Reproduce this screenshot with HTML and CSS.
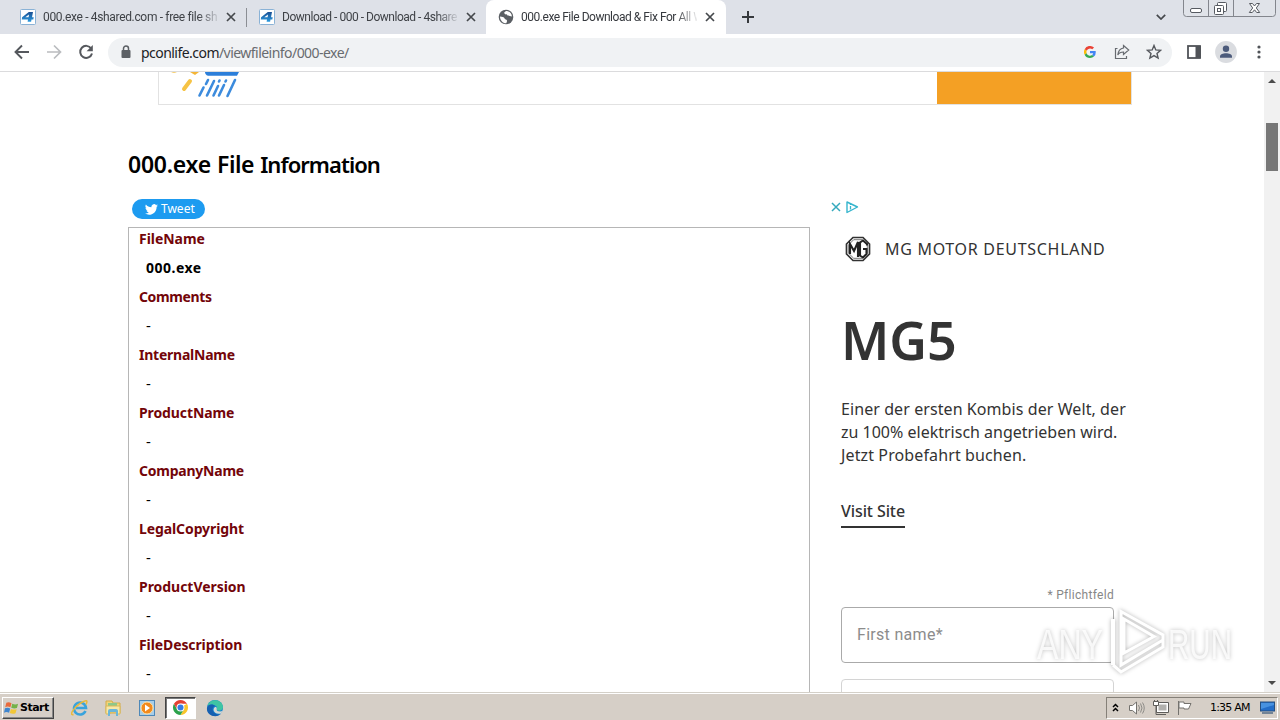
FILE: index.html
```html
<!DOCTYPE html>
<html lang="en">
<head>
<meta charset="utf-8">
<title>000.exe File Download &amp; Fix For All Windows OS</title>
<link rel="stylesheet" href="styles.css">
</head>
<body>
<svg class="defs" width="0" height="0">
  <defs>
    <linearGradient id="blue4" x1="0" y1="0" x2="0" y2="1"><stop offset="0" stop-color="#1a4f93"/><stop offset="1" stop-color="#2b9be0"/></linearGradient>
    <symbol id="four" viewBox="0 0 16 16"><rect x=".5" y=".5" width="15" height="15" rx="1" fill="#fff" stroke="#8ab2d6"/><path d="M8.800 3h4.200L12 8.200h1.700l-.4 2.300h-1.800l-.4 2.300H7.600l.4-2.300H1.800l.3-2.200zM9 5.400 5.300 8.200h3.300z" fill="url(#blue4)"/></symbol>
    <symbol id="close" viewBox="0 0 10 10"><path d="m1 1 8 8M9 1 1 9" stroke="#45484c" stroke-width="1.7"/></symbol>
  </defs>
</svg>
<header class="tabstrip">
  <div class="tab first"><svg class="fav"><use href="#four"/></svg><span class="tab-title t1">000.exe - 4shared.com - free file sh</span><svg class="x"><use href="#close"/></svg></div>
  <div class="tab"><svg class="fav"><use href="#four"/></svg><span class="tab-title t2">Download - 000 - Download - 4share</span><svg class="x"><use href="#close"/></svg></div>
  <div class="tab active"><svg class="fav" viewBox="0 0 16 16"><circle cx="8" cy="8" r="7.300" fill="#5b5f64"/><path d="M2 7.500c2 .2 4.200.6 4.600 2 .5 1.300 2.400.8 2.500 2.400l-.8 2.400C5 14.500 2 11.500 2 7.500zM8 2c-1 1-2.600 1.400-1.300 2.700.8.8 2.300.2 2.600 1.300.4 1.500 2.700.8 4.600 1.600C14 4.700 11.500 2 8 2z" fill="#fff"/></svg><span class="tab-title t3">000.exe File Download &amp; Fix For All W</span><svg class="x"><use href="#close"/></svg></div>
  <svg class="plus" viewBox="0 0 12 12"><path d="M6 0v12M0 6h12" stroke="#36393d" stroke-width="2"/></svg>
  <svg class="chev" viewBox="0 0 10 6"><path d="m.8.8 4.200 4.200L9.200.8" fill="none" stroke="#45484c" stroke-width="1.7"/></svg>
  <svg class="winbtns" viewBox="0 0 94 17"><path d="M.5 0v13.500a3 3 0 0 0 3 3h86a3 3 0 0 0 3-3V0M25.500 0v16M50.500 0v16" fill="#e0e3e9" stroke="#83868d"/><g fill="#fff" stroke="#565a61"><rect x="7.500" y="8.500" width="11" height="4" rx="1.500"/><rect x="34.500" y="2.500" width="9" height="9" rx="1"/><rect x="31.500" y="5.500" width="9" height="9" rx="1"/><rect x="34.500" y="8.500" width="3" height="3"/></g><path d="m66.500 3.500h3l2 2.500 2-2.500h3L73.300 8l3.400 4.500h-3l-2.200-2.700-2.200 2.700h-3L69.700 8z" fill="#fff" stroke="#565a61"/></svg>
</header>
<nav class="toolbar">
  <svg class="ic" viewBox="0 0 16 16"><path d="M15 8H2M8 1.500 1.500 8 8 14.500" fill="none" stroke="#55585d" stroke-width="1.9"/></svg>
  <svg class="ic" viewBox="0 0 16 16"><path d="M1 8h13M8 1.500 14.500 8 8 14.500" fill="none" stroke="#babcbf" stroke-width="1.7"/></svg>
  <svg class="ic" viewBox="0 0 16 16"><path d="M13.200 4.500A6 6 0 1 0 14 9.500" fill="none" stroke="#55585d" stroke-width="2"/><path d="M14.800 1v6.200H8.600z" fill="#55585d"/></svg>
  <div class="omnibox">
    <svg class="lock" viewBox="0 0 10 14"><path d="M2.500 6V3.500a2.500 2.500 0 0 1 5 0V6" fill="none" stroke="#5c6065" stroke-width="1.500"/><rect x=".5" y="5" width="9" height="8" rx="1" fill="#5c6065"/></svg>
    <span class="url"><b>pconlife.com</b>/viewfileinfo/000-exe/</span>
    <svg class="g" viewBox="0 0 48 48"><path fill="#ea4335" d="M24 9.500c3.500 0 6.700 1.200 9.200 3.600l6.900-6.900A24 24 0 0 0 2.600 13.200l8 6.200A14.300 14.300 0 0 1 24 9.500z"/><path fill="#4285f4" d="M47 24.500c0-1.600-.2-3.100-.4-4.500H24v9h12.900a11 11 0 0 1-4.800 7.200l7.700 6A23 23 0 0 0 47 24.500z"/><path fill="#fbbc05" d="M10.500 28.600a14.500 14.500 0 0 1 0-9.200l-8-6.200a24 24 0 0 0 0 21.600z"/><path fill="#34a853" d="M24 48c6.500 0 11.900-2.100 15.900-5.800l-7.700-6A14.400 14.400 0 0 1 10.500 28.600l-8 6.200A24 24 0 0 0 24 48z"/></svg>
    <svg class="share" viewBox="0 0 16 16"><path d="M3.500 4.500h-2v10h11v-2.500M9.500 1.500 14.700 6l-5.200 4.500V8C6.800 8 5 8.800 3.800 11 4.200 7 6 4.500 9.500 4z" fill="none" stroke="#676b70" stroke-width="1.200"/></svg>
    <svg class="star" viewBox="0 0 16 16"><path d="m8 1.500 1.800 4.400 4.800.4L11 9.500l1.100 4.600L8 11.600l-4.100 2.500L5 9.500 1.400 6.300l4.800-.4z" fill="none" stroke="#55585d" stroke-width="1.400"/></svg>
  </div>
  <svg class="side" viewBox="0 0 14 14"><rect x="1" y="1" width="12" height="12" fill="#fff" stroke="#505358" stroke-width="1.800"/><path d="M8.500 1H14v12H8.500z" fill="#505358"/></svg>
  <svg class="avatar" viewBox="0 0 22 22"><circle cx="11" cy="11" r="10.900" fill="#dadce0"/><circle cx="11" cy="7.800" r="3.200" fill="#4c5b7b"/><path d="M5 16.800v-1.300c0-4.200 12-4.200 12 0v1.300z" fill="#4c5b7b"/></svg>
  <svg class="dots" viewBox="0 0 4 14"><g fill="#505358"><circle cx="2" cy="2" r="1.600"/><circle cx="2" cy="7" r="1.600"/><circle cx="2" cy="12" r="1.600"/></g></svg>
</nav>
<main class="viewport">
  <div class="page">
    <div class="banner">
      <svg class="weather" viewBox="0 0 75 28"><path d="M3 0q3 1.500 6 0" fill="#f4bd3c"/><path d="M22 0l5 3 4-3z" fill="#f4b536"/><path d="m22 9-6 8" stroke="#f6c344" stroke-width="4" stroke-linecap="round"/><path d="M37 0h34l-2 3.800H40q-3-1-3-3.800z" fill="#2c7fda"/><path d="m41 8-2 4M36.500 15.500l-4 8M47 9l-7 14.500M52.500 8.500l-.5 1M51 14l-4.500 9.500M59 8.500l-.5 1M57 13l-5 10.500M68 8l-7.500 16" transform="translate(-1)" fill="none" stroke="#3c8bdd" stroke-width="2.600" stroke-linecap="round"/></svg>
      <div class="orange"></div>
    </div>
    <h1><span class="w1">000.exe</span> <span class="w2">File</span> <span class="w3">Information</span></h1>
    <div class="columns">
      <section class="left">
        <div class="tweet"><svg viewBox="0 0 24 20"><path fill="#fff" d="M24 2.400c-.9.400-1.800.6-2.800.8 1-.6 1.800-1.500 2.200-2.700-1 .5-2 1-3.100 1.200A4.900 4.900 0 0 0 11.900 6C7.700 6 4.100 4 1.700.9-.3 4.500 1 6.500 3.200 7.500c-.8 0-1.600-.2-2.200-.6 0 2.300 1.600 4.400 3.900 4.900-.7.200-1.500.2-2.200.1.600 2 2.400 3.400 4.600 3.400A10 10 0 0 1 0 17.500C9 23 21.500 17.500 21.500 4.800c1-.7 1.800-1.500 2.500-2.400z"/></svg><span>Tweet</span></div>
        <dl class="info">
          <dt class="k1">FileName</dt><dd class="name">000.exe</dd>
          <dt class="k2">Comments</dt><dd>-</dd>
          <dt class="k3">InternalName</dt><dd>-</dd>
          <dt class="k4">ProductName</dt><dd>-</dd>
          <dt class="k5">CompanyName</dt><dd>-</dd>
          <dt class="k6">LegalCopyright</dt><dd>-</dd>
          <dt class="k7">ProductVersion</dt><dd>-</dd>
          <dt class="k8">FileDescription</dt><dd>-</dd>
        </dl>
      </section>
      <aside class="ad">
        <svg class="adchoices" viewBox="0 0 30 14"><path d="m2 3 8 8M10 3l-8 8" stroke="#35a9bd" stroke-width="1.500"/><path d="M17 2v10.500L27.500 7z" fill="none" stroke="#35b5cd" stroke-width="1.400" stroke-linejoin="round"/><path d="M20.500 6v3.500M20.500 4v1" stroke="#35b5cd" stroke-width="1.300"/></svg>
        <div class="brand"><svg viewBox="0 0 26 26"><path d="M8 1.500h10L24.500 8v10L18 24.500H8L1.500 18V8z" fill="#fff" stroke="#333" stroke-width="1.700"/><path d="M8.700 3.700h8.600l5 5v8.600l-5 5H8.700l-5-5V8.700z" fill="none" stroke="#555" stroke-width=".8"/><path d="M5 18V8l4 7 4-9v15M22 9.500V8l-4-3.500-3 2v13l3 2 3.500-3.500v-5h-3.500" fill="none" stroke="#222" stroke-width="2.100"/></svg><span>MG MOTOR DEUTSCHLAND</span></div>
        <h2>MG5</h2>
        <p class="copy"><span class="c1">Einer der ersten Kombis der Welt, der</span><br><span class="c2">zu 100% elektrisch angetrieben wird.</span><br><span class="c3">Jetzt Probefahrt buchen.</span></p>
        <a class="visit">Visit Site</a>
        <div class="required">* Pflichtfeld</div>
        <div class="field">First name*</div>
        <div class="field dim"></div>
      </aside>
    </div>
  </div>
  <div class="scrollbar">
    <svg viewBox="0 0 8 4"><path d="M0 4h8L4 0z" fill="#4b4b4b"/></svg>
    <div class="thumb"></div>
    <svg class="down" viewBox="0 0 8 4"><path d="M0 0h8L4 4z" fill="#4b4b4b"/></svg>
  </div>
</main>
<footer class="taskbar">
  <div class="start"><svg viewBox="0 0 16 16"><path d="M2.500 2.500Q5 1 8 3L6.800 7.300Q4 5.800 1.300 7.200z" fill="#e96a3c"/><path d="M8.800 3.400Q12 5 15 3.500L13.800 8Q11 9 7.700 7.700z" fill="#73b24a"/><path d="M1 8.300q3-1.300 5.600.2L5.400 13Q2.500 11.500 0 13z" fill="#3e85cf"/><path d="M7.400 9q3 1.200 6.100.2L12.300 13.500q-3 1.300-6.100-.2z" fill="#f2c737"/></svg><b>Start</b></div>
  <svg class="app ie" viewBox="0 0 18 18"><path d="M14.500 12A6 6 0 1 1 15 9H5" fill="none" stroke="#39a3dc" stroke-width="2.600"/><path d="M2.500 15.500C-2 17 2 9 9 4.500s8-3 6 1" fill="none" stroke="#e9b93a" stroke-width="1.500"/></svg>
  <svg class="app folder" viewBox="0 0 18 18"><path d="M2 2h6l1 2h7v10H2z" fill="#f1d479" stroke="#d4ac49"/><path d="M4 4h9v3H4z" fill="#8ec889"/><path d="M2 7h14v8h-3v-4H6v4H2z" fill="#f8e8a6" stroke="#d9b95b"/><path d="M4 17v-5q0-2 2-2h6q2 0 2 2v5h-2v-4H6v4z" fill="#6bb6d9"/></svg>
  <svg class="app media" viewBox="0 0 18 18"><rect x="1.500" y="1.500" width="15" height="15" fill="#a7cee9" stroke="#4e88b8"/><circle cx="9" cy="9" r="6" fill="#f28a1d" stroke="#ffe0a5"/><path d="M7 5.500v7l5-3.500z" fill="#fff"/></svg>
  <div class="running"><svg viewBox="0 0 18 18"><path d="M9 9 15.900 5A8 8 0 0 1 9 17l3.500-6z" fill="#f9c52b"/><path d="M9 9l3.500 2L9 17A8 8 0 0 1 2.100 5L5.500 11z" fill="#2ba24c"/><path d="M2.100 5 5.500 11 9 5h6.900A8 8 0 0 0 2.100 5z" fill="#e34133"/><circle cx="9" cy="9" r="4.200" fill="#fff"/><circle cx="9" cy="9" r="3.200" fill="#347be4"/></svg></div>
  <svg class="app edge" viewBox="0 0 18 18"><circle cx="9" cy="9" r="8" fill="#1782cf"/><path d="M1.500 7C3-.5 16-1 17 8c.2 4-5.500 4.500-6.500 2.500C12 8 10 6.500 8 6 5 5 2.500 6 1.500 7z" fill="#3fc5a3"/><path d="M1 9c1-4 6-4.500 8-2-3 1-3.500 5 0 7.500 2 1.500 4.500 1 6 .3C10 20 0 16 1 9z" fill="#1760b0"/><path d="M9 8c3 0 1 2.500 2 3.500s4 1.500 6 0l-2 3c-4 1-7-1-7.500-3.500Q7.500 9 9 8z" fill="#d6d9d4"/></svg>
  <div class="tray">
    <svg class="up" viewBox="0 0 8 9"><path d="m1 4 2.500-2.500L6 4M1 8l2.500-2.500L6 8" fill="none" stroke="#000" stroke-width="1.500"/></svg>
    <svg class="sound" viewBox="0 0 17 16"><path d="M1.500 5.500h3L8.500 2v12l-4-3.500h-3z" fill="#fff" stroke="#74726e"/><path d="M10.500 5q2 3 0 6M12.500 3.500q3 4.500 0 9M14.500 2.500q3.500 5.500 0 11" fill="none" stroke="#858380" stroke-width=".9"/></svg>
    <svg class="net" viewBox="0 0 17 16"><rect x="5.500" y="3.500" width="10" height="8" fill="#b1b0ad" stroke="#fff" stroke-width="2"/><path d="M4.500 2.500h12v10h-12zM7 14.500h7" fill="none" stroke="#5e5d5a"/><path d="M1.500 1.500h5v4h-5z" fill="#fff" stroke="#5e5d5a"/><path d="M4 5.500v9h3M2.500 0v2M5.500 0v2" fill="none" stroke="#5e5d5a"/></svg>
    <svg class="flag" viewBox="0 0 17 16"><path d="M2.500 1v14M3 2h5v1.500h7L12.500 9H8V8H3z" fill="#fff" stroke="#74726e"/></svg>
    <span class="clock">1:35 AM</span>
    <svg class="desk" viewBox="0 0 15 13"><rect x=".5" y="1" width="14" height="9" fill="#236dc8" stroke="#275080"/><path d="M1 2h13v2L1 8z" fill="#4892e0"/><path d="M2 12h11" stroke="#526b86" stroke-width="1.500"/></svg>
  </div>
</footer>
<svg class="watermark" viewBox="0 0 200 72">
  <g class="wm-shadow" fill="#fff" fill-opacity=".8">
    <text x="1" y="54" textLength="66" lengthAdjust="spacingAndGlyphs">ANY</text>
    <text x="132" y="54" textLength="64" lengthAdjust="spacingAndGlyphs">RUN</text>
    <g fill="none" stroke="#fff" stroke-width="3"><path d="M77 14v46" stroke-width="4"/><path d="M85 6.500 127 30v5L85 60zM88 14v34l30-16.500zM77 60l8 7 42-25v-7"/></g>
  </g>
</svg>
</body>
</html>
```
FILE: styles.css
```css
* { box-sizing: border-box; }
body { margin: 0; width: 1280px; height: 720px; overflow: hidden; display: flex; flex-direction: column; background: #fff; font-family: "Noto Sans", sans-serif; position: relative; }
svg { display: block; flex: none; }
.defs { position: absolute; }

.tabstrip { height: 34px; flex: none; display: flex; align-items: center; background: #dee1e8; }
.tab { width: 239px; height: 34px; padding: 0 10px 0 12px; display: flex; align-items: center; font: 12px/16px Roboto, sans-serif; color: #3f4247; }
.tab.first { width: 247px; padding-left: 20px; border-right: 1px solid transparent; background: linear-gradient(#8b8e94, #8b8e94) right 8px / 1px 19px no-repeat; background-origin: border-box; }
.tab.active { width: 240px; background: #fff; border-radius: 8px 8px 0 0; color: #36393e; }
.fav { width: 16px; height: 16px; margin-right: 7px; }
.tab-title { width: 176px; white-space: nowrap; -webkit-mask-image: linear-gradient(90deg, #000 155px, transparent 178px); mask-image: linear-gradient(90deg, #000 155px, transparent 178px); }
.t1 { letter-spacing: -.34px; }
.t2 { letter-spacing: -.48px; }
.t3 { letter-spacing: -.47px; }
.x { width: 10px; height: 10px; margin-left: 8px; }
.plus { width: 12px; height: 12px; margin-left: 16px; }
.chev { width: 10px; height: 6px; margin-left: auto; }
.winbtns { width: 94px; height: 17px; margin: 0 3px 0 17px; align-self: flex-start; }

.toolbar { height: 38px; flex: none; display: flex; align-items: center; padding: 0 0 1px 14px; border-bottom: 1px solid #dbdbdd; background: #fff; }
.ic { width: 16px; height: 16px; margin-right: 16px; }
.omnibox { width: 1064px; height: 29px; margin-left: -2px; border-radius: 15px; background: #f0f2f4; display: flex; align-items: center; padding: 0 10px 0 13px; }
.lock { width: 10px; height: 14px; margin-right: 10px; }
.url { font: 14px/20px "Noto Sans", sans-serif; color: #686b6f; letter-spacing: -.54px; flex: 1; padding-top: 1px; }
.url b { font-weight: 400; color: #202124; }
.g { width: 12px; height: 12px; margin-right: 18px; }
.share { width: 16px; height: 16px; margin-right: 16px; }
.star { width: 16px; height: 16px; }
.side { width: 14px; height: 14px; margin-left: 15px; }
.avatar { width: 22px; height: 22px; margin-left: 14px; }
.dots { width: 4px; height: 14px; margin-left: 20px; }

.viewport { height: 620px; flex: none; overflow: hidden; display: flex; }
.page { width: 1264px; height: 620px; overflow: hidden; }
.banner { width: 974px; height: 33px; margin-left: 158px; border: 1px solid #e2e2e2; border-top: 0; display: flex; justify-content: space-between; }
.weather { width: 75px; height: 28px; margin-left: 9px; }
.orange { width: 194px; height: 32px; background: #f4a024; }
h1 { margin: 43px 0 0 128px; font: 600 23px/32px "Noto Sans", sans-serif; color: #000; white-space: nowrap; width: max-content; }
.w1 { letter-spacing: -.25px; }
.w2 { letter-spacing: -.4px; }
.w3 { font-size: 22px; letter-spacing: -.95px; }
.columns { display: flex; margin: 19px 0 0 128px; }
.left { width: 682px; }
.tweet { width: 73px; height: 20px; margin-left: 4px; padding-left: 13px; border-radius: 10px; background: #1d9bf0; color: #fff; display: flex; align-items: center; font: 12px/18px "Noto Sans", sans-serif; }
.tweet svg { width: 13px; height: 11px; margin-right: 3px; }
.info { height: 490px; margin: 8px 0 0; border: 1px solid #b6b6b6; padding: 0 10px; color: #000; }
dt, dd { height: 29px; white-space: nowrap; }
dt { color: #730509; font: 700 14px/22px "Noto Sans", sans-serif; letter-spacing: -.1px; }
.k2 { letter-spacing: -.38px; }
.k3, .k5 { letter-spacing: -.23px; }
.k7, .k1 { letter-spacing: -.04px; }
dd { margin: 0 0 0 7px; font: 15px/20px "Noto Sans", sans-serif; }
dd.name { font-weight: 700; font-size: 14px; line-height: 22px; letter-spacing: .5px; }

.ad { width: 300px; height: 560px; margin-left: 18px; padding: 0 13px; display: flex; flex-direction: column; color: #333; }
.ad > * { flex: none; }
.adchoices { width: 30px; height: 14px; margin: 1px 0 0 -11px; }
.brand { display: flex; align-items: center; height: 26px; margin: 22px 0 0 4px; font: 16px/24px "Noto Sans", sans-serif; letter-spacing: .7px; white-space: nowrap; }
.brand svg { width: 26px; height: 26px; margin-right: 14px; }
h2 { margin: 42px 0 0 0; font: 600 52px/72px "Noto Sans", sans-serif; height: 72px; }
.copy { margin: 22px 0 0; font: 16px/23px "Noto Sans", sans-serif; white-space: nowrap; }
.c1 { letter-spacing: .08px; }
.c3 { letter-spacing: .12px; }
.visit { margin-top: 33px; width: 64px; height: 28px; border-bottom: 2px solid #333; font: 500 16px/23px "Noto Sans", sans-serif; letter-spacing: -.1px; white-space: nowrap; }
.required { margin: 60px 1px 5px 0; text-align: right; font: 12px/14px Roboto, sans-serif; color: #878787; letter-spacing: .3px; }
.field { width: 273px; height: 56px; border: 1px solid #aaa; border-radius: 4px; padding-left: 15px; font: 16px/53px Roboto, sans-serif; color: #8c8c8c; letter-spacing: .3px; }
.field.dim { margin-top: 16px; border-color: #d4d4d4; }
.scrollbar { width: 16px; background: #f1f1f1; display: flex; flex-direction: column; align-items: center; padding: 7px 0 7px; }
.scrollbar svg { width: 8px; height: 4px; }
.thumb { width: 12px; height: 48px; background: #777; margin-top: 40px; }
.scrollbar .down { margin-top: auto; }

.taskbar { height: 28px; flex: none; display: flex; align-items: center; padding: 3px 2px 1px; background: #d6cfc7; border-top: 1px solid #d4d0c8; box-shadow: inset 0 1px #fff; }
.start { width: 52px; height: 22px; padding-left: 1px; display: flex; align-items: center; border: 1px solid; border-color: #fff #444 #444 #fff; box-shadow: inset -1px -1px #888; font: 11px/16px "DejaVu Sans", sans-serif; color: #000; }
.start svg { width: 15px; height: 16px; margin-right: 1px; }
.start b { letter-spacing: -.5px; }
.app { width: 18px; height: 18px; }
.ie { margin-left: 17px; }
.folder { margin-left: 15px; }
.media { margin-left: 16px; }
.running { width: 31px; height: 22px; margin-left: 9px; border: 1px solid; border-color: #444 #fff #fff #444; background: #fff; box-shadow: inset 1px 1px #777; display: grid; place-items: center; }
.running svg { width: 17px; height: 17px; }
.edge { margin-left: 10px; }
.tray { width: 172px; height: 22px; margin-left: auto; border: 1px solid; border-color: #858078 #fff #fff #858078; display: flex; align-items: center; padding-left: 5px; font: 11px/16px "DejaVu Sans", sans-serif; color: #000; }
.up { width: 8px; height: 9px; }
.sound, .net, .flag { width: 17px; height: 16px; }
.sound { margin-left: 8px; }
.net { margin-left: 7px; }
.flag { margin-left: 7px; }
.clock { margin-left: 17px; width: 41px; letter-spacing: -.8px; white-space: nowrap; }
.desk { width: 15px; height: 13px; margin-left: 9px; }
.watermark { position: absolute; left: 1036px; top: 605px; width: 200px; height: 72px; overflow: visible; }
.watermark text { font: 43px "Liberation Sans", sans-serif; }
.wm-shadow { filter: drop-shadow(0 0 2px rgba(0, 0, 0, .3)); }
```
